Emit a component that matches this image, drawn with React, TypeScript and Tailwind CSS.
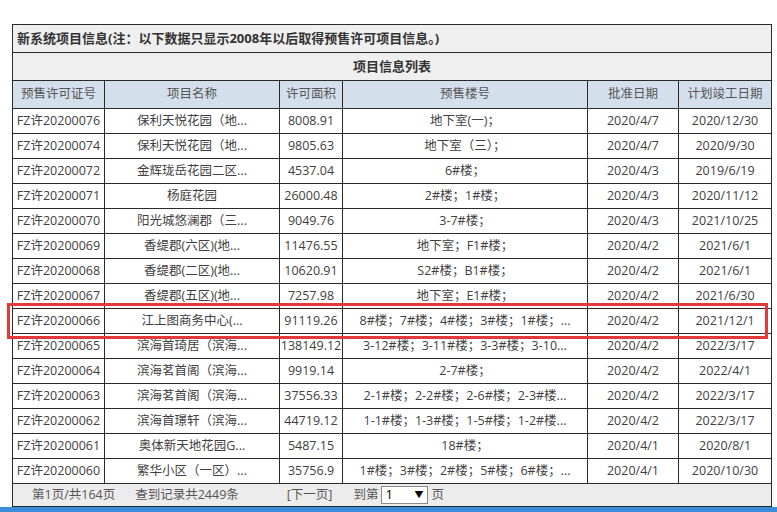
import React from 'react'

type Row = {
  no: string
  name: string
  area: string
  build: string
  date: string
  done: string
}

const rows: Row[] = [
  { no: 'FZ许20200076', name: '保利天悦花园（地...', area: '8008.91', build: '地下室(一)；', date: '2020/4/7', done: '2020/12/30' },
  { no: 'FZ许20200074', name: '保利天悦花园（地...', area: '9805.63', build: '地下室（三）；', date: '2020/4/7', done: '2020/9/30' },
  { no: 'FZ许20200072', name: '金辉珑岳花园二区...', area: '4537.04', build: '6#楼；', date: '2020/4/3', done: '2019/6/19' },
  { no: 'FZ许20200071', name: '杨庭花园', area: '26000.48', build: '2#楼；1#楼；', date: '2020/4/3', done: '2020/11/12' },
  { no: 'FZ许20200070', name: '阳光城悠澜郡（三...', area: '9049.76', build: '3-7#楼；', date: '2020/4/3', done: '2021/10/25' },
  { no: 'FZ许20200069', name: '香缇郡(六区)(地...', area: '11476.55', build: '地下室；F1#楼；', date: '2020/4/2', done: '2021/6/1' },
  { no: 'FZ许20200068', name: '香缇郡(二区)(地...', area: '10620.91', build: 'S2#楼；B1#楼；', date: '2020/4/2', done: '2021/6/1' },
  { no: 'FZ许20200067', name: '香缇郡(五区)(地...', area: '7257.98', build: '地下室；E1#楼；', date: '2020/4/2', done: '2021/6/30' },
  { no: 'FZ许20200066', name: '江上图商务中心(...', area: '91119.26', build: '8#楼；7#楼；4#楼；3#楼；1#楼；...', date: '2020/4/2', done: '2021/12/1' },
  { no: 'FZ许20200065', name: '滨海首琦居（滨海...', area: '138149.12', build: '3-12#楼；3-11#楼；3-3#楼；3-10...', date: '2020/4/2', done: '2022/3/17' },
  { no: 'FZ许20200064', name: '滨海茗首阁（滨海...', area: '9919.14', build: '2-7#楼；', date: '2020/4/2', done: '2022/4/1' },
  { no: 'FZ许20200063', name: '滨海茗首阁（滨海...', area: '37556.33', build: '2-1#楼；2-2#楼；2-6#楼；2-3#楼...', date: '2020/4/2', done: '2022/3/17' },
  { no: 'FZ许20200062', name: '滨海首璟轩（滨海...', area: '44719.12', build: '1-1#楼；1-3#楼；1-5#楼；1-2#楼...', date: '2020/4/2', done: '2022/3/17' },
  { no: 'FZ许20200061', name: '奥体新天地花园G...', area: '5487.15', build: '18#楼；', date: '2020/4/1', done: '2020/8/1' },
  { no: 'FZ许20200060', name: '繁华小区（一区）...', area: '35756.9', build: '1#楼；3#楼；2#楼；5#楼；6#楼；...', date: '2020/4/1', done: '2020/10/30' },
]

const headers = ['预售许可证号', '项目名称', '许可面积', '预售楼号', '批准日期', '计划竣工日期']

export default function App() {
  const cell = 'border border-[#2a2a2a] h-[25px] p-0 text-center whitespace-nowrap overflow-hidden'

  return (
    <div
      className="relative flex h-[512px] w-[777px] flex-col bg-white text-[12.5px] text-[#404040]"
      style={{ fontFamily: '"Open Sans", "Noto Sans CJK SC", sans-serif' }}
    >
      <div className="pl-[12px] pt-[24px]">
        <table className="w-[759px] table-fixed border-collapse border border-[#2a2a2a]">
          <colgroup>
            <col className="w-[92px]" />
            <col className="w-[175px]" />
            <col className="w-[63px]" />
            <col className="w-[245px]" />
            <col className="w-[91px]" />
            <col className="w-[93px]" />
          </colgroup>
          <tbody>
            <tr>
              <td
                colSpan={6}
                className="h-[28px] border border-[#2a2a2a] bg-[#efefef] px-[4px] text-left text-[13px] font-bold text-[#333]"
              >
                新系统项目信息(注：以下数据只显示2008年以后取得预售许可项目信息。)
              </td>
            </tr>
            <tr>
              <td
                colSpan={6}
                className="h-[28px] border border-[#2a2a2a] bg-[#efefef] text-center text-[13px] font-bold text-[#333]"
              >
                项目信息列表
              </td>
            </tr>
            <tr>
              {headers.map((h) => (
                <td key={h} className="h-[28px] border border-[#2a2a2a] bg-[#d3dfeb] text-center text-[#555]">
                  {h}
                </td>
              ))}
            </tr>
            {rows.map((r) => (
              <tr key={r.no}>
                <td className={cell}>{r.no}</td>
                <td className={cell}>{r.name}</td>
                <td className={cell}>{r.area}</td>
                <td className={cell}>{r.build}</td>
                <td className={cell}>{r.date}</td>
                <td className={cell}>{r.done}</td>
              </tr>
            ))}
            <tr>
              <td colSpan={6} className="h-[23px] border border-[#2a2a2a] bg-[#ececec] p-0 text-[#555]">
                <div className="flex items-center pl-[19px]">
                  <span>第1页/共164页</span>
                  <span className="ml-[20px]">查到记录共2449条</span>
                  <span className="ml-[48px]">[下一页]</span>
                  <span className="ml-[21px]">到第</span>
                  <div className="ml-[3px] flex h-[18px] w-[47px] items-center justify-between border border-[#8a8a8a] bg-white pl-[3px] pr-[4px] text-[13px] text-black">
                    <span>1</span>
                    <span className="text-[9px]">▼</span>
                  </div>
                  <span className="ml-[3px]">页</span>
                </div>
              </td>
            </tr>
          </tbody>
        </table>
      </div>
      <div className="mt-auto h-[5px] w-full bg-[#3b8ddb]" />
      {/* highlight around row 066 */}
      <div className="pointer-events-none absolute left-[7px] top-[303px] h-[36px] w-[761px] border-[3px] border-[#e5383b]" />
    </div>
  )
}
